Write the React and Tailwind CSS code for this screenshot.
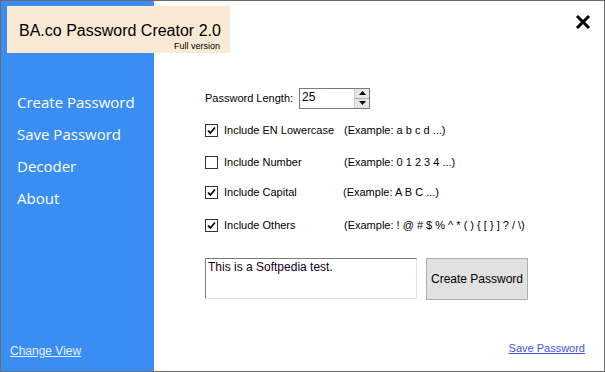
import React from "react";

const ui = { fontFamily: '"Liberation Sans", Arial, sans-serif' };
const nav = { fontFamily: '"Open Sans", "Noto Sans", sans-serif' };

function Check({ checked }) {
  return (
    <span className="w-[13px] h-[13px] border border-[#333] bg-white flex items-center justify-center shrink-0">
      {checked && (
        <svg width="9" height="9" viewBox="0 0 9 9">
          <path d="M1 4.5 L3.3 7 L8 1.5" stroke="#000" strokeWidth="1.8" fill="none" />
        </svg>
      )}
    </span>
  );
}

function Row({ checked, label, example, w }) {
  return (
    <div className="flex items-center h-[14px]">
      <Check checked={checked} />
      <span className="ml-[6px] whitespace-nowrap" style={{ width: w }}>{label}</span>
      <span className="whitespace-nowrap">{example}</span>
    </div>
  );
}

export default function App() {
  return (
    <div className="w-[605px] h-[372px] border border-[#6b6b6b] bg-white flex relative overflow-hidden" style={ui}>
      <div className="w-[153px] bg-[#3a8ef3] flex flex-col shrink-0">
        <div className="h-[85px]" />
        <div className="flex flex-col pl-[16px] text-white text-[15px] leading-[32px]" style={nav}>
          <span>Create Password</span>
          <span>Save Password</span>
          <span>Decoder</span>
          <span>About</span>
        </div>
        <div className="flex-1" />
        <a className="ml-[9px] mb-[11px] text-[12px] text-[#e6eeff] underline" href="#">Change View</a>
      </div>

      <div className="absolute left-[6px] top-[5px] w-[223px] h-[47px] bg-[#fae9d4] flex flex-col">
        <span className="ml-[12px] mt-[15px] text-[16px] leading-[20px] text-black whitespace-nowrap">BA.co Password Creator 2.0</span>
        <span className="self-end mr-[10px] text-[9px] leading-[10px] text-black whitespace-nowrap">Full version</span>
      </div>

      <div className="flex-1 relative text-[11px] text-black">
        <div className="pl-[51px] pt-[86px] flex flex-col">
          <div className="flex items-center h-[22px]">
            <span className="w-[94px]">Password Length:</span>
            <div className="w-[71px] h-[21px] border border-[#7a7a7a] flex bg-white">
              <span className="flex-1 pl-[2px] text-[12px] leading-[17px]">25</span>
              <div className="w-[15px] flex flex-col border-l border-[#ccc]">
                <div className="flex-1 bg-[#e6e6e6] border-b border-[#aaa] flex items-center justify-center">
                  <svg width="7" height="4" viewBox="0 0 7 4"><path d="M0 4 L3.5 0 L7 4Z" fill="#000" /></svg>
                </div>
                <div className="flex-1 bg-[#e6e6e6] flex items-center justify-center">
                  <svg width="7" height="4" viewBox="0 0 7 4"><path d="M0 0 L3.5 4 L7 0Z" fill="#000" /></svg>
                </div>
              </div>
            </div>
          </div>
          <div className="mt-[14px] flex flex-col gap-[18px]">
            <Row checked label="Include EN Lowercase" example="(Example: a b c d ...)" w={120} />
            <Row label="Include Number" example="(Example: 0 1 2 3 4 ...)" w={120} />
            <div className="-mt-[2px]">
              <Row checked label="Include Capital" example="(Example: A B C ...)" w={119} />
            </div>
            <div className="mt-[1px]">
              <Row checked label="Include Others" example={"(Example: ! @ # $ % ^ * ( ) { [ } ] ? / \\)"} w={120} />
            </div>
          </div>
          <div className="mt-[26px] flex gap-[9px]">
            <div className="w-[212px] h-[41px] border border-[#7a7a7a] border-r-[#e3e3e3] border-b-[#e3e3e3] px-[2px] pt-[1px] text-[12px] leading-[14px] text-[#1a0020]">
              This is a Softpedia test.
            </div>
            <button className="w-[102px] h-[42px] bg-[#e1e1e1] border border-[#adadad] text-[12px]">Create Password</button>
          </div>
        </div>
        <a className="absolute right-[19px] bottom-[15px] text-[11px] text-[#3b55e6] underline" href="#">Save Password</a>
        <svg className="absolute right-[13px] top-[13px]" width="16" height="16" viewBox="0 0 16 16">
          <path d="M2 2 L14 14 M14 2 L2 14" stroke="#000" strokeWidth="3" />
        </svg>
      </div>
    </div>
  );
}
